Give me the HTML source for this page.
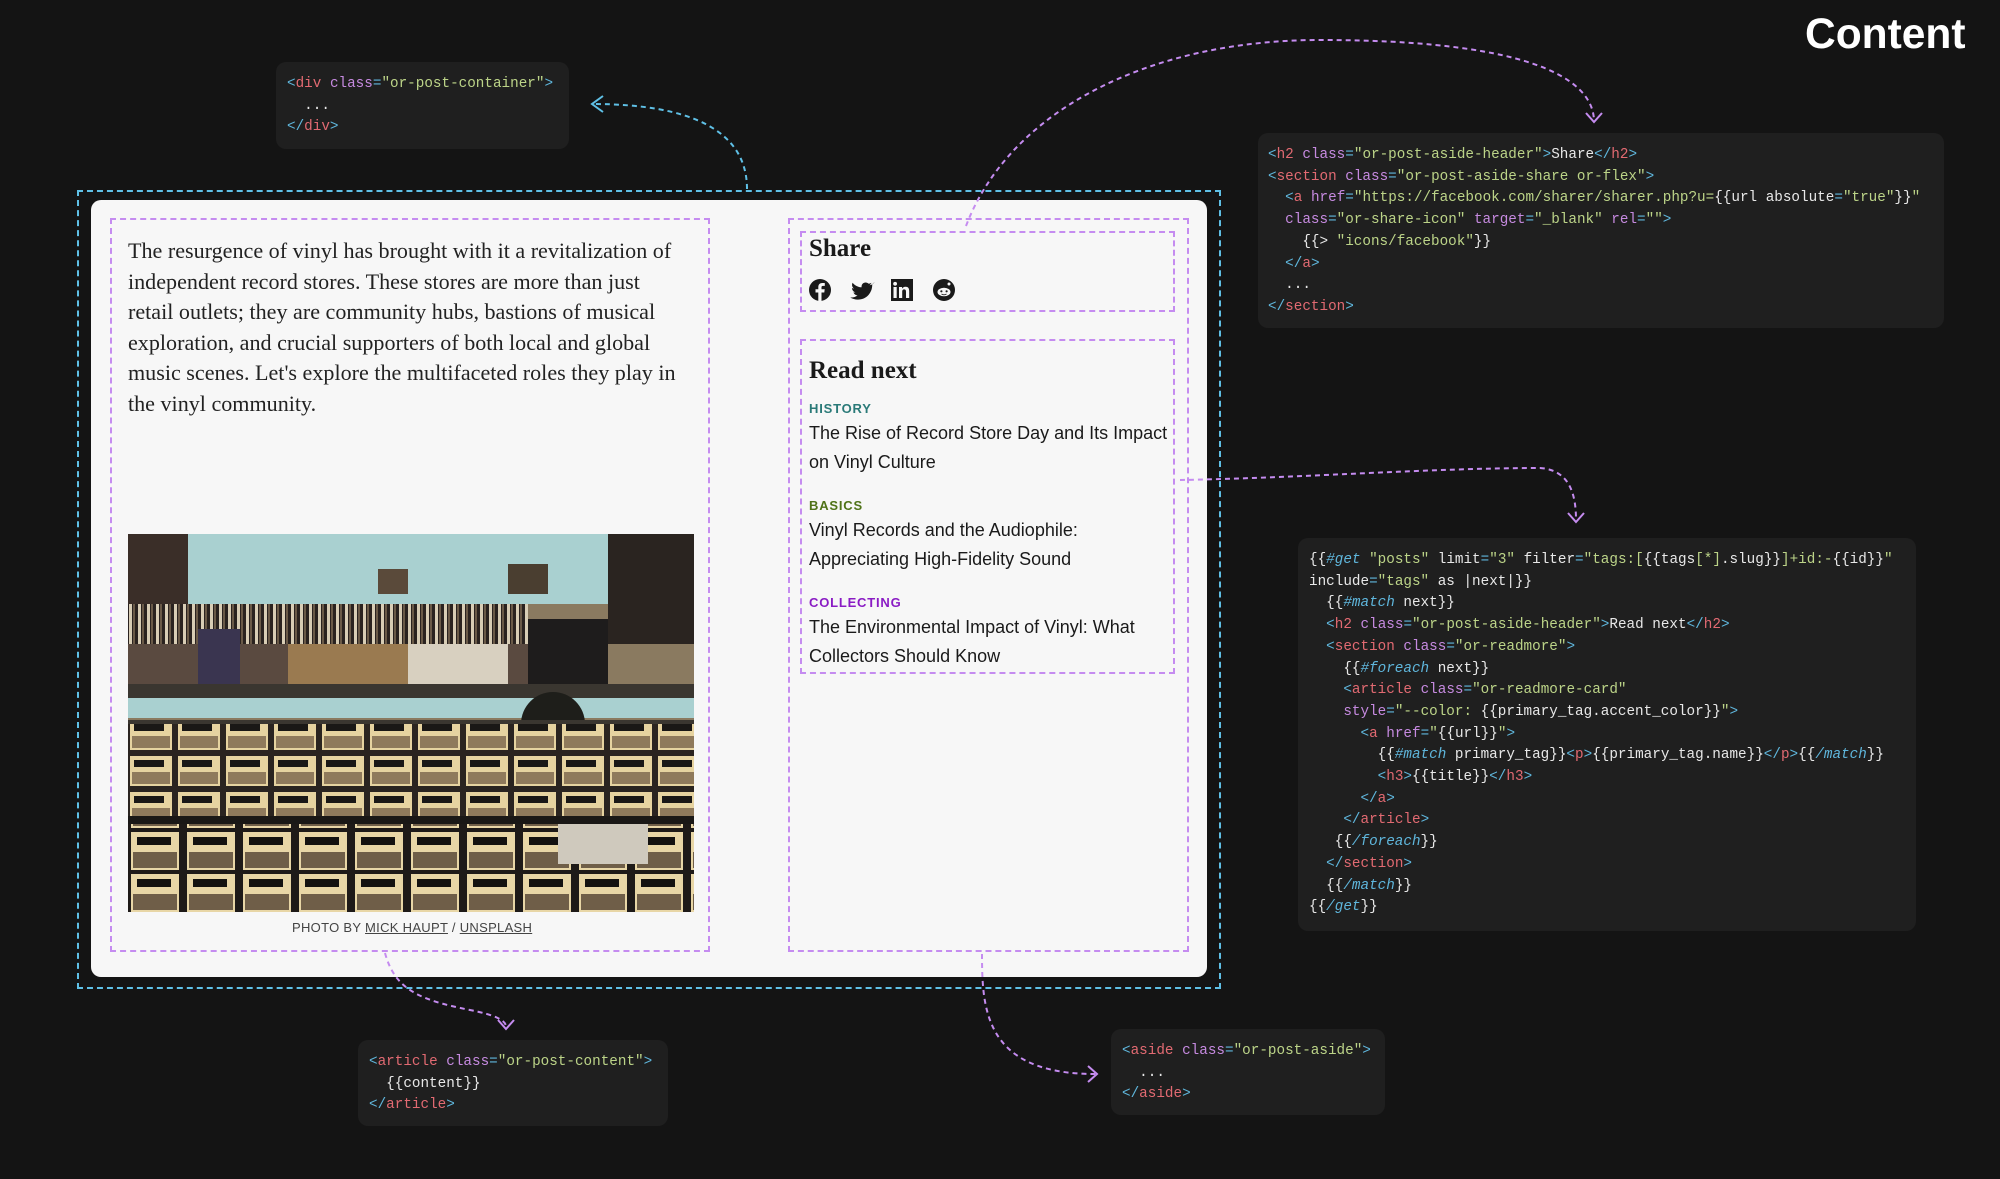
<!DOCTYPE html>
<html><head><meta charset="utf-8">
<style>
*{margin:0;padding:0;box-sizing:border-box}
body{width:2000px;height:1179px;background:#141414;position:relative;overflow:hidden;font-family:"Liberation Sans",sans-serif}
.abs{position:absolute}
.code{position:absolute;background:#1f1f1f;border-radius:10px;font-family:"Liberation Mono",monospace;font-size:14.3px;line-height:21.7px;color:#e8e8e8;white-space:pre;padding:0}
.code pre{position:absolute;font:inherit;white-space:pre}
.t{color:#e26a72}.a{color:#c68ae0}.s{color:#bcd488}.p{color:#5fb6dc}.i{color:#5fb6dc;font-style:italic}
.card{position:absolute;left:91px;top:200px;width:1116px;height:777px;background:#f7f7f7;border-radius:10px}
.dash{position:absolute;border:2px dashed #c58cf0}
.para{position:absolute;left:128px;top:236px;font-family:"Liberation Serif",serif;font-size:22.1px;line-height:30.6px;color:#222;white-space:pre}
.h{position:absolute;font-family:"Liberation Serif",serif;font-weight:bold;color:#1a1a1a;font-size:25px}
.tag{position:absolute;left:809px;font-size:13px;font-weight:bold;letter-spacing:.8px}
.tt{position:absolute;left:809px;font-size:18px;line-height:29px;color:#1a1a1a;white-space:pre}
</style></head><body>

<div class="abs" style="left:1805px;top:11px;font-size:42.5px;font-weight:bold;color:#fff">Content</div>

<div class="code" style="left:276px;top:62px;width:293px;height:87px">
<pre style="left:11px;top:12px"><span class="p">&lt;</span><span class="t">div</span> <span class="a">class</span><span class="p">=</span><span class="s">"or-post-container"</span><span class="p">&gt;</span>
  ...
<span class="p">&lt;/</span><span class="t">div</span><span class="p">&gt;</span></pre></div>

<div class="code" style="left:1258px;top:133px;width:686px;height:195px">
<pre style="left:10px;top:12px"><span class="p">&lt;</span><span class="t">h2</span> <span class="a">class</span><span class="p">=</span><span class="s">"or-post-aside-header"</span><span class="p">&gt;</span>Share<span class="p">&lt;/</span><span class="t">h2</span><span class="p">&gt;</span>
<span class="p">&lt;</span><span class="t">section</span> <span class="a">class</span><span class="p">=</span><span class="s">"or-post-aside-share or-flex"</span><span class="p">&gt;</span>
  <span class="p">&lt;</span><span class="t">a</span> <span class="a">href</span><span class="p">=</span><span class="s">"https://facebook.com/sharer/sharer.php?u=</span>{{url absolute<span class="p">=</span><span class="s">"true"</span>}}<span class="s">"</span>
  <span class="a">class</span><span class="p">=</span><span class="s">"or-share-icon"</span> <span class="a">target</span><span class="p">=</span><span class="s">"_blank"</span> <span class="a">rel</span><span class="p">=</span><span class="s">""</span><span class="p">&gt;</span>
    {{&gt; <span class="s">"icons/facebook"</span>}}
  <span class="p">&lt;/</span><span class="t">a</span><span class="p">&gt;</span>
  ...
<span class="p">&lt;/</span><span class="t">section</span><span class="p">&gt;</span></pre></div>

<div class="code" style="left:1298px;top:538px;width:618px;height:393px">
<pre style="left:11px;top:12px">{{<span class="i">#get</span> <span class="s">"posts"</span> limit<span class="p">=</span><span class="s">"3"</span> filter<span class="p">=</span><span class="s">"tags:[</span>{{tags<span class="s">[*]</span>.slug}}<span class="s">]+id:-</span>{{id}}<span class="s">"</span>
include<span class="p">=</span><span class="s">"tags"</span> as |next|}}
  {{<span class="i">#match</span> next}}
  <span class="p">&lt;</span><span class="t">h2</span> <span class="a">class</span><span class="p">=</span><span class="s">"or-post-aside-header"</span><span class="p">&gt;</span>Read next<span class="p">&lt;/</span><span class="t">h2</span><span class="p">&gt;</span>
  <span class="p">&lt;</span><span class="t">section</span> <span class="a">class</span><span class="p">=</span><span class="s">"or-readmore"</span><span class="p">&gt;</span>
    {{<span class="i">#foreach</span> next}}
    <span class="p">&lt;</span><span class="t">article</span> <span class="a">class</span><span class="p">=</span><span class="s">"or-readmore-card"</span>
    <span class="a">style</span><span class="p">=</span><span class="s">"--color: </span>{{primary_tag.accent_color}}<span class="s">"</span><span class="p">&gt;</span>
      <span class="p">&lt;</span><span class="t">a</span> <span class="a">href</span><span class="p">=</span><span class="s">"</span>{{url}}<span class="s">"</span><span class="p">&gt;</span>
        {{<span class="i">#match</span> primary_tag}}<span class="p">&lt;</span><span class="t">p</span><span class="p">&gt;</span>{{primary_tag.name}}<span class="p">&lt;/</span><span class="t">p</span><span class="p">&gt;</span>{{<span class="i">/match</span>}}
        <span class="p">&lt;</span><span class="t">h3</span><span class="p">&gt;</span>{{title}}<span class="p">&lt;/</span><span class="t">h3</span><span class="p">&gt;</span>
      <span class="p">&lt;/</span><span class="t">a</span><span class="p">&gt;</span>
    <span class="p">&lt;/</span><span class="t">article</span><span class="p">&gt;</span>
   {{<span class="i">/foreach</span>}}
  <span class="p">&lt;/</span><span class="t">section</span><span class="p">&gt;</span>
  {{<span class="i">/match</span>}}
{{<span class="i">/get</span>}}</pre></div>

<div class="code" style="left:358px;top:1040px;width:310px;height:86px">
<pre style="left:11px;top:12px"><span class="p">&lt;</span><span class="t">article</span> <span class="a">class</span><span class="p">=</span><span class="s">"or-post-content"</span><span class="p">&gt;</span>
  {{content}}
<span class="p">&lt;/</span><span class="t">article</span><span class="p">&gt;</span></pre></div>

<div class="code" style="left:1111px;top:1029px;width:274px;height:86px">
<pre style="left:11px;top:12px"><span class="p">&lt;</span><span class="t">aside</span> <span class="a">class</span><span class="p">=</span><span class="s">"or-post-aside"</span><span class="p">&gt;</span>
  ...
<span class="p">&lt;/</span><span class="t">aside</span><span class="p">&gt;</span></pre></div>

<div class="abs" style="left:77px;top:190px;width:1144px;height:799px;border:2px dashed #5fc0e6"></div>
<div class="card"></div>
<div class="dash" style="left:110px;top:218px;width:600px;height:734px"></div>
<div class="dash" style="left:788px;top:218px;width:401px;height:734px"></div>
<div class="dash" style="left:800px;top:231px;width:375px;height:81px"></div>
<div class="dash" style="left:800px;top:339px;width:375px;height:335px"></div>

<div class="para">The resurgence of vinyl has brought with it a revitalization of
independent record stores. These stores are more than just
retail outlets; they are community hubs, bastions of musical
exploration, and crucial supporters of both local and global
music scenes. Let's explore the multifaceted roles they play in
the vinyl community.</div>

<svg class="abs" style="left:128px;top:534px" width="566" height="378" viewBox="0 0 566 378">
<defs>
<pattern id="cd" width="9" height="40" patternUnits="userSpaceOnUse"><rect width="9" height="40" fill="#2a2320"/><rect x="1" width="3" height="40" fill="#d8cdb5"/><rect x="5" width="2" height="40" fill="#6a5a48"/></pattern>
<pattern id="bin" width="48" height="36" patternUnits="userSpaceOnUse"><rect width="48" height="36" fill="#2a2420"/><rect x="2" y="6" width="42" height="30" fill="#e6d3a0"/><rect x="6" y="10" width="30" height="7" fill="#1a1816"/><rect x="4" y="22" width="38" height="12" fill="#8f7a5c"/></pattern>
<pattern id="bin2" width="56" height="42" patternUnits="userSpaceOnUse"><rect width="56" height="42" fill="#1e1a18"/><rect x="3" y="4" width="48" height="38" fill="#e8d6a6"/><rect x="9" y="9" width="34" height="8" fill="#141210"/><rect x="5" y="24" width="44" height="16" fill="#6f5e48"/></pattern>
</defs>
<rect width="566" height="378" fill="#8a7a60"/>
<rect width="566" height="70" fill="#a9d0d0"/>
<rect x="0" y="0" width="60" height="70" fill="#3a2e28"/>
<rect x="480" y="0" width="86" height="110" fill="#2a2420"/>
<rect x="380" y="30" width="40" height="30" fill="#4a3e30"/>
<rect x="250" y="35" width="30" height="25" fill="#5a4a3a"/>
<rect x="0" y="70" width="400" height="40" fill="url(#cd)"/>
<rect x="0" y="110" width="400" height="40" fill="#5a4a40"/>
<rect x="70" y="95" width="42" height="55" fill="#3a3550"/>
<rect x="160" y="110" width="120" height="40" fill="#9a7a50"/>
<rect x="280" y="110" width="100" height="40" fill="#d8d0c0"/>
<rect x="400" y="85" width="80" height="65" fill="#1e1c1c"/>
<rect x="0" y="150" width="566" height="14" fill="#3a3630"/>
<rect x="0" y="164" width="566" height="20" fill="#a9d0d0"/>
<circle cx="425" cy="190" r="32" fill="#1e1e1a"/>
<rect x="0" y="186" width="566" height="4" fill="#3a3630"/>
<rect x="0" y="190" width="566" height="92" fill="url(#bin)"/>
<rect x="0" y="282" width="566" height="8" fill="#1a1816"/>
<rect x="0" y="290" width="566" height="88" fill="url(#bin2)"/>
<rect x="430" y="290" width="90" height="40" fill="#cfc9bd"/>
</svg>
<div class="abs" style="left:292px;top:920px;font-size:13px;color:#444;letter-spacing:.3px">PHOTO BY <u>MICK HAUPT</u> / <u>UNSPLASH</u></div>

<div class="h" style="left:809px;top:235px">Share</div>
<svg class="abs" style="left:809px;top:279px" width="150" height="24" viewBox="0 0 150 24">
<circle cx="11" cy="11" r="11" fill="#1a1a1a"/><path d="M12.5 22V13.5H15.3L15.7 10.3H12.5V8.4C12.5 7.5 12.8 6.9 14 6.9H15.8V4.1C15.4 4 14.4 4 13.3 4 10.9 4 9.3 5.4 9.3 8.1V10.3H6.5V13.5H9.3V22Z" fill="#f7f7f7"/>
<path d="M63 5.5c-.8.4-1.6.6-2.5.7.9-.5 1.6-1.4 1.9-2.4-.8.5-1.800.9-2.7 1-1.7-1.8-4.6-1.7-6.2.1-.8.9-1.1 2.2-.9 3.4-3.5-.2-6.8-1.8-9-4.6-1.1 2-.5 4.5 1.4 5.8-.7 0-1.4-.2-2-.5 0 2.1 1.5 3.9 3.5 4.3-.6.2-1.3.2-2 .1.6 1.8 2.2 3 4.1 3-1.8 1.4-4 2.1-6.3 2.1-.4 0-.8 0-1.2-.1 2.3 1.5 5 2.2 7.7 2.2 9.3 0 14.4-7.700 14.4-14.4v-.7c1-.7 1.8-1.6 2.5-2.6z" fill="#1a1a1a"/>
<rect x="82" y="0" width="22" height="22" fill="#1a1a1a"/><rect x="84.5" y="8" width="3.2" height="11" fill="#f7f7f7"/><circle cx="86.1" cy="4.8" r="1.9" fill="#f7f7f7"/><path d="M90 8h3v1.6c.6-1 1.8-1.9 3.6-1.9 3 0 3.6 2 3.6 4.5V19h-3.2v-5.8c0-1.4-.1-2.8-1.8-2.8s-2 1.2-2 2.7V19H90z" fill="#f7f7f7"/>
<circle cx="135" cy="11" r="11" fill="#1a1a1a"/><ellipse cx="135" cy="13" rx="6.5" ry="4.3" fill="#f7f7f7"/><circle cx="140" cy="5" r="1.5" fill="#f7f7f7"/><circle cx="132.4" cy="12.3" r="1.1" fill="#1a1a1a"/><circle cx="137.6" cy="12.3" r="1.1" fill="#1a1a1a"/><path d="M132.5 15c1.5 1 3.5 1 5 0" stroke="#1a1a1a" stroke-width=".9" fill="none"/>
</svg>

<div class="h" style="left:809px;top:357px">Read next</div>
<div class="tag" style="top:401px;color:#2a7a78">HISTORY</div>
<div class="tt" style="top:419px">The Rise of Record Store Day and Its Impact
on Vinyl Culture</div>
<div class="tag" style="top:498px;color:#4f7318">BASICS</div>
<div class="tt" style="top:516px">Vinyl Records and the Audiophile:
Appreciating High-Fidelity Sound</div>
<div class="tag" style="top:595px;color:#8a1cc4">COLLECTING</div>
<div class="tt" style="top:613px">The Environmental Impact of Vinyl: What
Collectors Should Know</div>

<svg class="abs" style="left:0;top:0" width="2000" height="1179" fill="none" stroke-width="2" stroke-dasharray="5 4">
<path d="M747,189 C747,130 690,104 592,104" stroke="#5fc0e6"/>
<path d="M603,96 L592,104 L603,112" stroke="#5fc0e6" stroke-dasharray="none"/>
<path d="M966,226 C1010,110 1150,40 1320,40 C1520,40 1592,75 1594,120" stroke="#c58cf0"/>
<path d="M1586,113 L1594,122 L1602,113" stroke="#c58cf0" stroke-dasharray="none"/>
<path d="M1180,480 C1300,478 1430,468 1540,468 C1570,470 1576,495 1576,520" stroke="#c58cf0"/>
<path d="M1568,513 L1576,522 L1584,513" stroke="#c58cf0" stroke-dasharray="none"/>
<path d="M385,953 C395,990 420,1000 470,1010 C495,1015 505,1020 506,1026" stroke="#c58cf0"/>
<path d="M498,1020 L506,1029 L514,1020" stroke="#c58cf0" stroke-dasharray="none"/>
<path d="M982,954 C982,1010 985,1074 1095,1074" stroke="#c58cf0"/>
<path d="M1088,1066 L1097,1074 L1088,1082" stroke="#c58cf0" stroke-dasharray="none"/>
</svg>
</body></html>
